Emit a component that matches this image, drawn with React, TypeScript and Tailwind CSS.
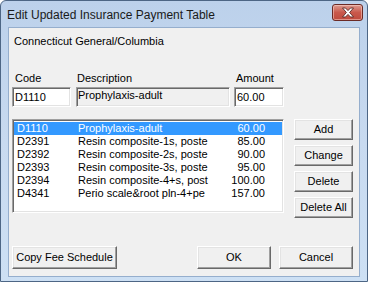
import React from "react"

const font = { fontFamily: '"Liberation Sans", Arial, sans-serif' }

const rows = [
  { code: "D1110", desc: "Prophylaxis-adult", amt: "60.00" },
  { code: "D2391", desc: "Resin composite-1s, poste", amt: "85.00" },
  { code: "D2392", desc: "Resin composite-2s, poste", amt: "90.00" },
  { code: "D2393", desc: "Resin composite-3s, poste", amt: "95.00" },
  { code: "D2394", desc: "Resin composite-4+s, post", amt: "100.00" },
  { code: "D4341", desc: "Perio scale&root pln-4+pe", amt: "157.00" },
]

// classic raised 3d button
function Btn({ label, className }: { label: string; className: string }) {
  return (
    <div
      className={`flex items-center justify-center bg-[#f0f0f0] border border-t-white border-l-white border-r-[#696969] border-b-[#696969] shadow-[inset_-1px_-1px_0_#a0a0a0,inset_1px_1px_0_#e3e3e3] text-[11px] text-black ${className}`}
    >
      {label}
    </div>
  )
}

const sunken =
  "border border-t-[#a0a0a0] border-l-[#a0a0a0] border-r-white border-b-white shadow-[inset_1px_1px_0_#696969,inset_-1px_-1px_0_#e3e3e3]"

export default function App() {
  return (
    <div className="w-[368px] h-[282px] bg-white" style={font}>
      <div className="w-[368px] h-[282px] rounded-t-[6px] border border-[#4d6685] bg-gradient-to-b from-[#bcd1eb] via-[#c8daf0] to-[#cde0f4] flex flex-col">
        {/* title bar */}
        <div className="h-[26px] flex items-center pl-[6px] pr-[4px] shrink-0">
          <span className="text-[12px] text-[#1a1a1a] leading-none mt-[1px]">Edit Updated Insurance Payment Table</span>
          <div className="ml-auto mt-[-4px] w-[31px] h-[17px] rounded-[3px] border border-[#6b2a25] bg-gradient-to-b from-[#dc9a90] via-[#c9594c] to-[#bf4a3d] flex items-center justify-center shadow-[inset_0_0_0_1px_rgba(255,220,210,0.5)]">
            <svg width="14" height="11" viewBox="0 0 14 11">
              <path
                d="M1.5 1 L4.5 1 L7 3.6 L9.5 1 L12.5 1 L8.6 5.5 L12.5 10 L9.5 10 L7 7.4 L4.5 10 L1.5 10 L5.4 5.5 Z"
                fill="#ffffff"
                stroke="#5a2a26"
                strokeWidth="0.9"
                strokeLinejoin="round"
              />
            </svg>
          </div>
        </div>

        {/* client area */}
        <div className="mx-[7px] mb-[4px] flex-1 bg-[#f0f0f0] border border-[#95aecd] pl-[3px] flex flex-col text-[11px] text-black">
          <div className="mt-[7px] h-[13px] leading-[13px] pl-[2px]">Connecticut General/Columbia</div>

          <div className="mt-[24px] flex h-[13px] leading-[13px]">
            <div className="w-[64px] pl-[3px]">Code</div>
            <div className="w-[158px] pl-[1px]">Description</div>
            <div className="pl-[2px]">Amount</div>
          </div>

          <div className="mt-[2px] flex items-center gap-[5px]">
            <div className={`w-[59px] h-[20px] bg-white ${sunken} pl-[2px] leading-[18px]`}>D1110</div>
            <div className={`w-[154px] h-[20px] bg-[#f0f0f0] ${sunken} pl-[1px] leading-[15px]`}>Prophylaxis-adult</div>
            <div className={`w-[50px] h-[20px] bg-white ${sunken} pl-[2px] leading-[18px] ml-[-1px]`}>60.00</div>
          </div>

          <div className="mt-[12px] flex items-start">
            <div className={`w-[272px] h-[94px] bg-white ${sunken} p-[1px] pt-[2px]`}>
              {rows.map((r, i) => (
                <div
                  key={r.code}
                  className={`flex h-[13px] leading-[13px] whitespace-nowrap ${i === 0 ? "bg-[#3399ff] text-white" : ""}`}
                >
                  <div className="w-[64px] pl-[3px]">{r.code}</div>
                  <div className="w-[143px] overflow-hidden">{r.desc}</div>
                  <div className="w-[44px] text-right">{r.amt}</div>
                </div>
              ))}
            </div>
            <div className="ml-[10px] flex flex-col gap-[5px]">
              <Btn label="Add" className="w-[59px] h-[21px]" />
              <Btn label="Change" className="w-[59px] h-[21px]" />
              <Btn label="Delete" className="w-[59px] h-[21px]" />
              <Btn label="Delete All" className="w-[59px] h-[21px]" />
            </div>
          </div>

          <div className="mt-[28px] flex items-center">
            <Btn label="Copy Fee Schedule" className="w-[105px] h-[23px]" />
            <Btn label="OK" className="w-[74px] h-[23px] ml-[80px]" />
            <Btn label="Cancel" className="w-[74px] h-[23px] ml-[8px]" />
          </div>
        </div>
      </div>
    </div>
  )
}
